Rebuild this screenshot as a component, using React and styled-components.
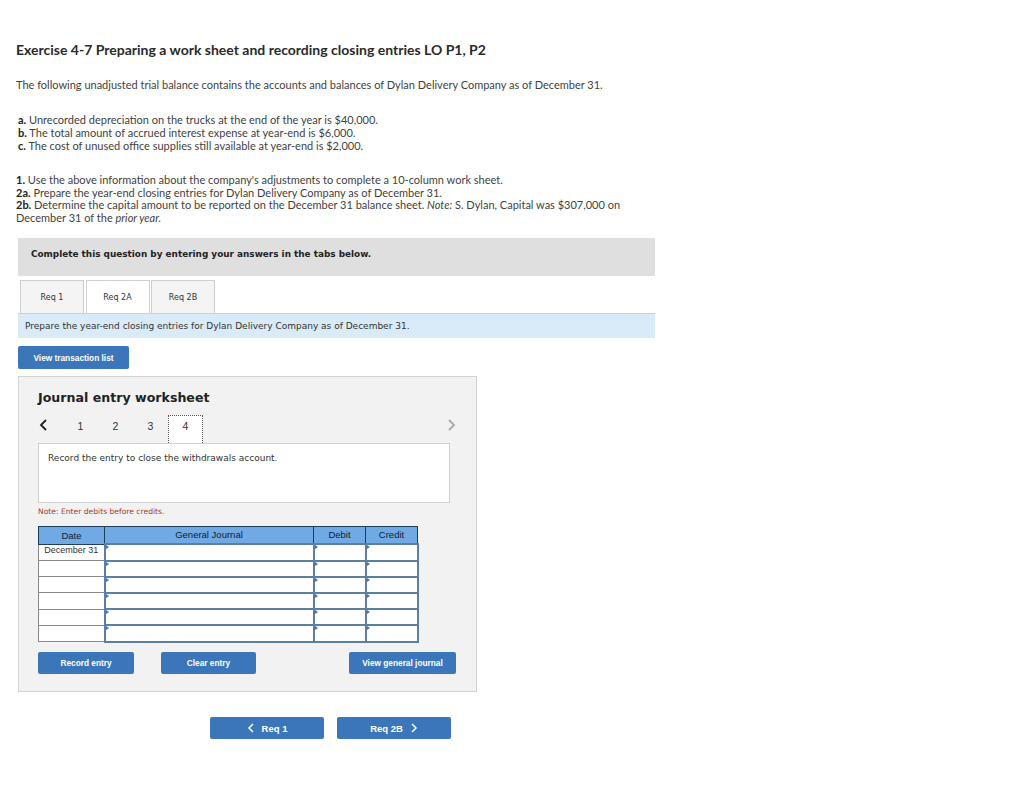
import React from "react";
import styled, { createGlobalStyle } from "styled-components";

const rows = ["December 31", "", "", "", "", ""];

export default function App() {
  return (
    <Page>
      <GlobalStyle />
      <Title>Exercise 4-7 Preparing a work sheet and recording closing entries LO P1, P2</Title>
      <Intro>
        The following unadjusted trial balance contains the accounts and balances of Dylan Delivery Company as of
        December 31.
      </Intro>
      <TextBlock $top={21} $leading={13} $indent={2}>
        <b>a.</b> Unrecorded depreciation on the trucks at the end of the year is $40,000.
        <br />
        <b>b.</b> The total amount of accrued interest expense at year-end is $6,000.
        <br />
        <b>c.</b> The cost of unused office supplies still available at year-end is $2,000.
      </TextBlock>
      <TextBlock $top={22} $leading={12.6}>
        <b>1.</b> Use the above information about the company's adjustments to complete a 10-column work sheet.
        <br />
        <b>2a.</b> Prepare the year-end closing entries for Dylan Delivery Company as of December 31.
        <br />
        <b>2b.</b> Determine the capital amount to be reported on the December 31 balance sheet. <i>Note:</i> S. Dylan,
        Capital was $307,000 on December 31 of the <i>prior year.</i>
      </TextBlock>

      <Question>
        <Banner>Complete this question by entering your answers in the tabs below.</Banner>
        <Tabs>
          <Tab>Req 1</Tab>
          <Tab $active>Req 2A</Tab>
          <Tab>Req 2B</Tab>
        </Tabs>
        <Instruction>Prepare the year-end closing entries for Dylan Delivery Company as of December 31.</Instruction>
        <TransactionButton>View transaction list</TransactionButton>

        <Worksheet>
          <Heading>Journal entry worksheet</Heading>
          <Stepper>
            <Arrow viewBox="0 0 10 14">
              <path d="M8 2 3 7l5 5" stroke="#222" />
            </Arrow>
            <Step>1</Step>
            <Step>2</Step>
            <Step>3</Step>
            <Step $active>4</Step>
            <NextArrow viewBox="0 0 10 14">
              <path d="m2 2 5 5-5 5" stroke="#a9a9a9" />
            </NextArrow>
          </Stepper>
          <EntryBox>Record the entry to close the withdrawals account.</EntryBox>
          <Note>Note: Enter debits before credits.</Note>
          <Journal>
            <colgroup>
              <col width="66" />
              <col width="209" />
              <col width="52" />
              <col width="52" />
            </colgroup>
            <thead>
              <tr>
                <HeadCell>Date</HeadCell>
                <HeadCell>General Journal</HeadCell>
                <HeadCell>Debit</HeadCell>
                <HeadCell>Credit</HeadCell>
              </tr>
            </thead>
            <tbody>
              {rows.map((date, i) => (
                <tr key={i}>
                  <DateCell>{date}</DateCell>
                  <InputCell />
                  <InputCell />
                  <InputCell />
                </tr>
              ))}
            </tbody>
          </Journal>
          <Actions>
            <ActionButton $width={96}>Record entry</ActionButton>
            <ActionButton $width={95}>Clear entry</ActionButton>
            <ActionButton $width={107} $push>
              View general journal
            </ActionButton>
          </Actions>
        </Worksheet>

        <Pager>
          <PagerButton>
            <PagerIcon viewBox="0 0 8 10">
              <path d="M6 1 2 5l4 4" />
            </PagerIcon>
            Req 1
          </PagerButton>
          <PagerButton>
            Req 2B
            <PagerIcon viewBox="0 0 8 10">
              <path d="m2 1 4 4-4 4" />
            </PagerIcon>
          </PagerButton>
        </Pager>
      </Question>
    </Page>
  );
}

const GlobalStyle = createGlobalStyle`
  body {
    margin: 0;
    background: #fff;
  }
`;

const Page = styled.div`
  width: 1024px;
  height: 790px;
  padding: 42px 0 0 16px;
  box-sizing: border-box;
  font-family: "Lato", "Liberation Sans", sans-serif;
  color: #3f3f3f;
  overflow: hidden;
`;

const Title = styled.h1`
  margin: 0;
  font-size: 14px;
  line-height: 15px;
  font-weight: 700;
  color: #2a2a2a;
`;

const Intro = styled.p`
  margin: 21px 0 0;
  font-size: 11px;
  line-height: 14px;
  width: 620px;
`;

const TextBlock = styled.p`
  margin: ${({ $top }) => $top}px 0 0 ${({ $indent }) => $indent || 0}px;
  font-size: 11px;
  line-height: ${({ $leading }) => $leading}px;
  width: 620px;

  b {
    color: #222;
  }
`;

const Question = styled.section`
  margin: 14px 0 0 2px;
`;

const Banner = styled.div`
  width: 637px;
  height: 38px;
  padding: 10px 0 0 13px;
  box-sizing: border-box;
  background: #dfdfdf;
  font: 700 8.9px/12px "DejaVu Sans", sans-serif;
  color: #222;
`;

const Tabs = styled.div`
  display: flex;
  gap: 1.5px;
  margin: 4px 0 0 2px;
  height: 33px;
`;

const Tab = styled.div`
  width: 64px;
  display: flex;
  align-items: center;
  justify-content: center;
  box-sizing: border-box;
  border: 1px solid #cfcfcf;
  border-bottom: 0;
  background: ${({ $active }) => ($active ? "#fff" : "#f4f4f4")};
  font: 8px "DejaVu Sans", sans-serif;
  color: #333;
`;

const Instruction = styled.div`
  width: 637px;
  height: 25px;
  padding-left: 7px;
  box-sizing: border-box;
  display: flex;
  align-items: center;
  border-top: 1px solid #c9d2d8;
  background: #d9ebf9;
  font: 9px "DejaVu Sans", sans-serif;
  color: #333;
`;

const BlueButton = styled.button`
  border: 0;
  border-radius: 2px;
  padding: 0;
  background: #3b76bb;
  color: #fff;
  font: 700 8.3px "Liberation Sans", sans-serif;
`;

const TransactionButton = styled(BlueButton)`
  display: block;
  width: 111px;
  height: 23px;
  margin-top: 8px;
`;

const Worksheet = styled.div`
  width: 459px;
  height: 316px;
  margin-top: 7px;
  padding: 0 19px;
  box-sizing: border-box;
  border: 1px solid #d4d4d4;
  background: #f2f2f2;
`;

const Heading = styled.h2`
  margin: 14px 0 0;
  font: 700 12.6px/14px "DejaVu Sans", sans-serif;
  color: #222;
`;

const Stepper = styled.div`
  display: flex;
  align-items: flex-start;
  height: 28px;
  margin-top: 10px;
  width: 419px;
`;

const Arrow = styled.svg`
  width: 10px;
  height: 14px;
  margin: 3px 15px 0 0;
  fill: none;
  stroke-width: 1.8;
`;

const NextArrow = styled(Arrow)`
  margin: 3px 0 0 auto;
`;

const Step = styled.div`
  width: 35px;
  height: 28px;
  padding-bottom: 7px;
  display: flex;
  align-items: center;
  justify-content: center;
  box-sizing: border-box;
  font: 10.5px "Liberation Sans", sans-serif;
  color: #333;
  background: ${({ $active }) => ($active ? "#fff" : "transparent")};
  border: ${({ $active }) => ($active ? "1px dotted #555" : "0")};
  border-bottom: 0;
`;

const EntryBox = styled.div`
  width: 412px;
  height: 60px;
  padding: 8px 9px;
  box-sizing: border-box;
  border: 1px solid #d0d0d0;
  background: #fff;
  font: 9px/13px "DejaVu Sans", sans-serif;
  color: #333;
`;

const Note = styled.div`
  margin-top: 4px;
  font: 7.6px/9px "DejaVu Sans", sans-serif;
  color: #a33a3a;
`;

const Journal = styled.table`
  width: 379px;
  margin-top: 10px;
  table-layout: fixed;
  border-collapse: collapse;
  font: 9px "Liberation Sans", sans-serif;
`;

const HeadCell = styled.th`
  height: 15px;
  padding: 0 0 1px;
  border: 1px solid #1f3d5c;
  background: #71a9e4;
  font-size: 9.5px;
  font-weight: 400;
  color: #14202c;
`;

const DateCell = styled.td`
  height: 14.2px;
  padding: 0;
  border: 1px solid #8a8a8a;
  background: #fff;
  text-align: center;
  vertical-align: top;
  color: #333;
`;

const InputCell = styled.td`
  position: relative;
  height: 14.2px;
  padding: 0;
  border: 2px solid #5b7ea3;
  background: #fff;

  &::before {
    content: "";
    position: absolute;
    top: 0;
    left: 0;
    border-left: 3px solid #3b76bb;
    border-top: 2px solid transparent;
    border-bottom: 2px solid transparent;
  }
`;

const Actions = styled.div`
  display: flex;
  gap: 27px;
  margin-top: 9px;
  width: 418px;
`;

const ActionButton = styled(BlueButton)`
  width: ${({ $width }) => $width}px;
  height: 22px;
  margin-left: ${({ $push }) => ($push ? "auto" : "0")};
`;

const Pager = styled.div`
  display: flex;
  gap: 13px;
  margin: 25px 0 0 192px;
`;

const PagerButton = styled(BlueButton)`
  width: 114px;
  height: 22px;
  display: flex;
  align-items: center;
  justify-content: center;
  gap: 7px;
  font-size: 9.5px;
`;

const PagerIcon = styled.svg`
  width: 8px;
  height: 10px;
  fill: none;
  stroke: #fff;
  stroke-width: 1.5;
`;
